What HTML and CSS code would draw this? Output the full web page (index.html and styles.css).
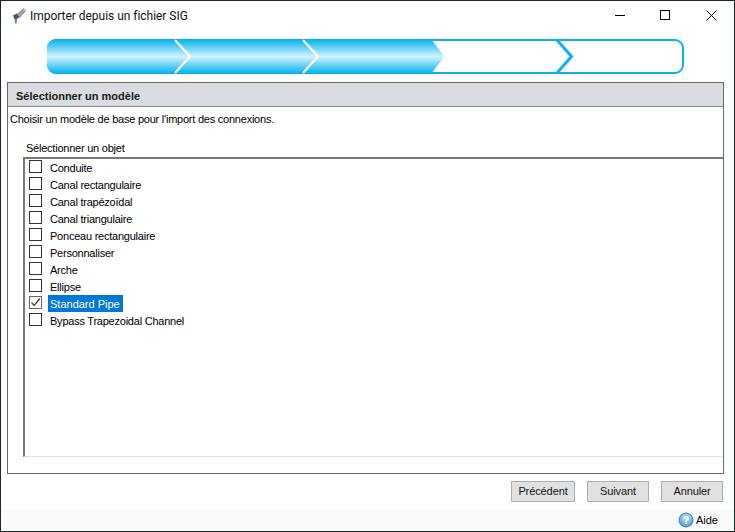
FILE: index.html
```html
<!DOCTYPE html>
<html lang="fr">
<head>
<meta charset="utf-8">
<title>Importer depuis un fichier SIG</title>
<link rel="stylesheet" href="styles.css">
</head>
<body>
<div class="window">
  <header class="titlebar">
    <svg class="app-icon" width="16" height="16" viewBox="0 0 16 16">
      <path d="M5.5 6.5 L13 .5 L15 2.5 L8.5 9.5 Z" fill="#a4a4a4" stroke="#707070" stroke-width=".6"/>
      <path d="M12.8 1 L14.6 2.8" stroke="#ececec" stroke-width="1"/>
      <path d="M2 7.5 L5.5 5.5 L8.5 9 L6.5 10.5 L6 11 L3.5 11 Z" fill="#4f545b"/>
      <path d="M3.6 11 L6 11 L5.6 15.5 L4 15.5 Z" fill="#3f8fc9"/>
    </svg>
    <span class="title">Importer depuis un fichier SIG</span>
    <div class="controls">
      <svg class="control" width="45" height="30" viewBox="0 0 45 30"><path d="M17 14.5H27" stroke="#000" fill="none"/></svg>
      <svg class="control" width="45" height="30" viewBox="0 0 45 30"><rect x="17.5" y="9.5" width="9" height="9" stroke="#000" fill="none"/></svg>
      <svg class="control" width="45" height="30" viewBox="0 0 45 30"><path d="M18.5 9.5L28.5 19.5M28.5 9.5L18.5 19.5" stroke="#000" fill="none"/></svg>
    </div>
  </header>

  <svg class="stepper" width="637" height="35" viewBox="0 0 637 35">
    <defs>
      <linearGradient id="fill" x1="0" y1="0" x2="0" y2="1">
        <stop offset="0" stop-color="#00b0ee"/>
        <stop offset=".5" stop-color="#d2f4fe"/>
        <stop offset="1" stop-color="#00b0ee"/>
      </linearGradient>
      <clipPath id="round"><rect x="0" y="0" width="637" height="35" rx="9"/></clipPath>
    </defs>
    <rect x="1" y="1" width="635" height="33" rx="8" fill="#fff" stroke="#0cb2ee" stroke-width="2"/>
    <path clip-path="url(#round)" d="M0 0H384L397.5 17.5L384 35H0Z" fill="url(#fill)"/>
    <path d="M128 1L143 17.5L128 34M256 1L271 17.5L256 34" fill="none" stroke="#fff" stroke-width="2"/>
    <path d="M510 1L524.5 17.5L510 34" fill="none" stroke="#0cb2ee" stroke-width="3"/>
  </svg>

  <main class="panel">
    <h1 class="panel-head">Sélectionner un modèle</h1>
    <p class="intro">Choisir un modèle de base pour l'import des connexions.</p>
    <div class="field-label">Sélectionner un objet</div>
    <ul class="list">
      <li class="item"><span class="box"></span><span class="text">Conduite</span></li>
      <li class="item"><span class="box"></span><span class="text">Canal rectangulaire</span></li>
      <li class="item"><span class="box"></span><span class="text">Canal trapézoïdal</span></li>
      <li class="item"><span class="box"></span><span class="text">Canal triangulaire</span></li>
      <li class="item"><span class="box"></span><span class="text">Ponceau rectangulaire</span></li>
      <li class="item"><span class="box"></span><span class="text">Personnaliser</span></li>
      <li class="item"><span class="box"></span><span class="text">Arche</span></li>
      <li class="item"><span class="box"></span><span class="text">Ellipse</span></li>
      <li class="item"><span class="box checked"><svg width="11" height="11" viewBox="0 0 11 11"><path d="M1.5 5.5L4.2 8.5L9.8 1.5" fill="none" stroke="#444" stroke-width="1.3"/></svg></span><span class="text selected">Standard Pipe</span></li>
      <li class="item"><span class="box"></span><span class="text">Bypass Trapezoidal Channel</span></li>
    </ul>
  </main>

  <div class="actions">
    <button class="btn btn-wide">Précédent</button>
    <button class="btn">Suivant</button>
    <button class="btn">Annuler</button>
  </div>

  <footer class="status">
    <svg class="help-icon" width="16" height="16" viewBox="0 0 16 16">
      <defs>
        <radialGradient id="ball" cx=".5" cy=".35" r=".7">
          <stop offset="0" stop-color="#cfe9f8"/>
          <stop offset="1" stop-color="#3b93cf"/>
        </radialGradient>
      </defs>
      <circle cx="8" cy="8" r="7" fill="url(#ball)" stroke="#3a86bd"/>
      <text x="8" y="12" text-anchor="middle" class="help-mark">?</text>
    </svg>
    <span class="help-text">Aide</span>
  </footer>
</div>
</body>
</html>
```

FILE: styles.css
```css
* { box-sizing: border-box; }
html, body { margin: 0; height: 100%; }
body {
  background: #1c2a22;
  font-family: "Liberation Sans", Arial, sans-serif;
  font-size: 11px;
  letter-spacing: -0.23px;
  color: #000;
}
.window {
  height: 532px;
  border: 1px solid #1c2a22;
  background: #fff;
  display: flex;
  flex-direction: column;
  overflow: hidden;
}
.titlebar {
  height: 30px;
  display: flex;
  align-items: center;
  padding: 0 0 0 10px;
  flex: none;
}
.app-icon { flex: none; }
.title {
  margin: -1px 0 0 3px;
  font-family: "Roboto", "Open Sans", sans-serif;
  font-size: 12px;
  letter-spacing: -0.03px;
  color: #111;
}
.controls { margin-left: auto; display: flex; margin-right: 1px; }
.control { display: block; }
.stepper {
  display: block;
  flex: none;
  margin: 8px 0 0 46px;
}
.panel {
  flex: none;
  height: 392px;
  margin: 8px 10px 0 6px;
  border: 1px solid #696969;
  display: flex;
  flex-direction: column;
}
.panel-head {
  margin: 0;
  height: 24px;
  padding: 2px 8px 0;
  flex: none;
  display: flex;
  align-items: center;
  background: #d9dde1;
  border-bottom: 1px solid #8a8a8a;
  font-size: 11px;
  font-weight: bold;
  letter-spacing: 0;
  color: #1a1a1a;
}
.intro {
  margin: 6px 0 0 2px;
  line-height: 13px;
  flex: none;
}
.field-label {
  margin: 16px 0 0 18px;
  line-height: 13px;
  flex: none;
}
.list {
  list-style: none;
  margin: 2px 0 0 15px;
  padding: 0 0 0 4px;
  flex: none;
  height: 300px;
  border-top: 2px solid #7a7a7a;
  border-left: 2px solid #7a7a7a;
  border-bottom: 1px solid #e3e3e3;
}
.item {
  height: 17px;
  display: flex;
  align-items: center;
}
.box {
  width: 13px;
  height: 13px;
  border: 1px solid #333;
  background: #fff;
  flex: none;
  margin-right: 6px;
  position: relative;
  top: -1px;
}
.box.checked { border-color: #666; }
.box svg { display: block; }
.text {
  height: 17px;
  line-height: 19px;
  padding: 0 2px;
}
.text.selected {
  background: #0078d7;
  color: #fff;
  letter-spacing: 0;
  width: 75px;
}
.actions {
  flex: none;
  display: flex;
  justify-content: flex-end;
  gap: 12px;
  margin-top: 7px;
  padding-right: 11px;
}
.btn {
  width: 62px;
  height: 21px;
  padding: 0 0 2px;
  background: #e1e1e1;
  border: 1px solid #adadad;
  font-family: inherit;
  font-size: 11px;
  letter-spacing: -0.1px;
  color: #111;
}
.btn-wide { width: 64px; }
.status {
  margin-top: auto;
  height: 22px;
  flex: none;
  background: #fafafa;
  display: flex;
  align-items: center;
  justify-content: flex-end;
  padding-right: 16px;
}
.help-icon { flex: none; margin-right: 2px; }
.help-mark {
  font-family: "Liberation Sans", Arial, sans-serif;
  font-size: 11px;
  font-weight: bold;
  fill: #fff;
}
.help-text { color: #000; font-size: 11px; letter-spacing: 0; }
```
